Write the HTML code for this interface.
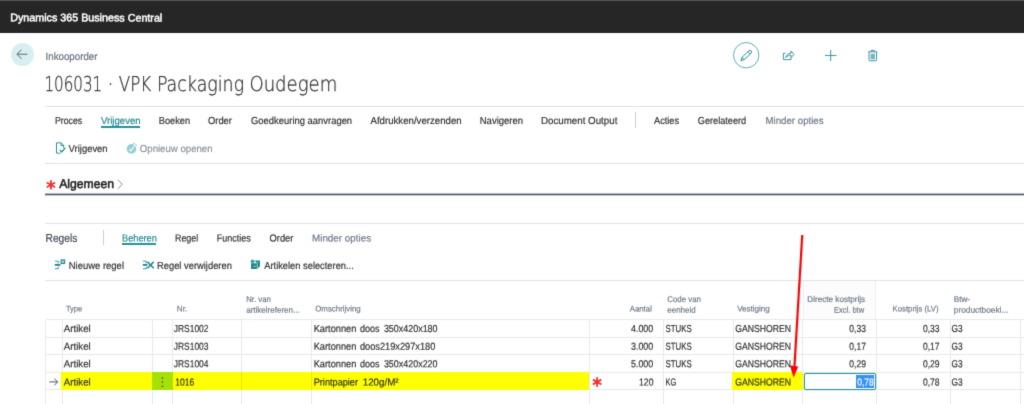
<!DOCTYPE html>
<html lang="nl">
<head>
<meta charset="utf-8">
<title>Inkooporder 106031 - Dynamics 365 Business Central</title>
<style>
html,body{margin:0;padding:0;background:#fff;}
body{width:1024px;height:404px;position:relative;overflow:hidden;font-family:"Liberation Sans",sans-serif;}
#fx{position:absolute;left:-8px;top:-8px;width:1040px;height:420px;background:#fff;filter:url(#soft);}
#page{position:absolute;left:8px;top:8px;width:1024px;height:404px;}
.t{position:absolute;left:0;top:0;white-space:pre;line-height:1;transform-origin:0 0;-webkit-text-stroke:0.18px currentColor;}
.sb{-webkit-text-stroke:0.5px currentColor;}
.tl{-webkit-text-stroke:0.3px currentColor;}
.abs{position:absolute;}
.topbar{left:-8px;top:-8px;width:1040px;height:40.5px;background:#262626;}
.topline{left:-8px;top:-8px;width:1040px;height:9px;background:#565656;}
.hl{position:absolute;height:1px;background:#e0e3e7;}
.vl{position:absolute;width:1px;background:#dde0e4;}
.gl{background:#e7e9eb;}
.back{left:10.5px;top:42.7px;width:23px;height:23px;border-radius:50%;background:#d8eff2;}
.yellow{background:#ffff00;}
</style>
</head>
<body>
<svg width="0" height="0" style="position:absolute"><defs><filter id="soft" x="0" y="0" width="100%" height="100%" color-interpolation-filters="sRGB"><feConvolveMatrix order="3" kernelMatrix="0.0144 0.0912 0.0144 0.0912 0.5776 0.0912 0.0144 0.0912 0.0144" edgeMode="duplicate" preserveAlpha="true"/></filter></defs></svg>
<div id="fx"><div id="page">
<div class="abs topbar"></div><div class="abs topline"></div>
<div class="abs back"></div>
<svg class="abs" style="left:0;top:0;overflow:visible" width="1024" height="404" viewBox="0 0 1024 404" fill="none">
  <rect x="45" y="193.6" width="990" height="1.7" fill="#4d586b"/>
  <!-- back arrow -->
  <path d="M27.5 54.2H17M21.6 49.6L17 54.2l4.6 4.6" stroke="#555" stroke-width="0.9"/>
</svg>

<!-- page header lines -->
<div class="hl" style="left:45px;top:105.5px;width:987px"></div>
<div class="hl" style="left:45px;top:163px;width:987px"></div>
<div class="hl" style="left:45px;top:222.6px;width:987px"></div>
<div class="hl" style="left:45px;top:280.3px;width:987px"></div>
<!-- active underlines -->
<div class="abs" style="left:100.8px;top:126.2px;width:39px;height:1.7px;background:#2a9099"></div>
<div class="abs" style="left:122px;top:243px;width:34.3px;height:1.7px;background:#2a9099"></div>
<!-- separators -->
<div class="vl" style="left:635px;top:112px;height:15.5px;background:#c9cdd1"></div>
<div class="vl" style="left:103.3px;top:230px;height:14.5px;background:#c9cdd1"></div>

<!-- grid -->
<div id="grid">
<div class="abs" style="left:802.7px;top:281px;width:73.3px;height:38.5px;background:#fcfcfd;border-left:1px solid #eff0f2;border-right:1px solid #eff0f2;box-sizing:border-box"></div>
<div class="hl gl" style="left:45.5px;top:319.0px;width:986.5px"></div>
<div class="hl gl" style="left:45.5px;top:336.6px;width:986.5px"></div>
<div class="hl gl" style="left:45.5px;top:354.2px;width:986.5px"></div>
<div class="hl gl" style="left:45.5px;top:371.8px;width:986.5px"></div>
<div class="hl gl" style="left:45.5px;top:389.4px;width:986.5px"></div>
<div class="vl gl" style="left:45.0px;top:319.5px;height:93px"></div>
<div class="vl gl" style="left:61.7px;top:319.5px;height:93px"></div>
<div class="vl gl" style="left:152.0px;top:319.5px;height:93px"></div>
<div class="vl gl" style="left:172.0px;top:319.5px;height:93px"></div>
<div class="vl gl" style="left:241.1px;top:319.5px;height:93px"></div>
<div class="vl gl" style="left:310.8px;top:319.5px;height:93px"></div>
<div class="vl gl" style="left:589.2px;top:319.5px;height:93px"></div>
<div class="vl gl" style="left:662.9px;top:319.5px;height:93px"></div>
<div class="vl gl" style="left:732.5px;top:319.5px;height:93px"></div>
<div class="vl gl" style="left:802.2px;top:319.5px;height:93px"></div>
<div class="vl gl" style="left:875.5px;top:319.5px;height:93px"></div>
<div class="vl gl" style="left:949.5px;top:319.5px;height:93px"></div>
<div class="vl gl" style="left:1019.8px;top:319.5px;height:93px"></div>
<div class="abs yellow" style="left:61.2px;top:372.3px;width:528px;height:17.6px"></div>
<div class="abs" style="left:152.3px;top:372.3px;width:20.4px;height:17.6px;background:#a5e006"></div>
<div class="abs" style="left:241.1px;top:372.3px;width:1px;height:17.6px;background:#e6e600"></div>
<div class="abs" style="left:310.8px;top:372.3px;width:1px;height:17.6px;background:#e6e600"></div>
<div class="abs yellow" style="left:732.3px;top:372.3px;width:70.6px;height:17.4px"></div>
<div class="abs" style="left:803.5px;top:373.4px;width:72.8px;height:16.4px;box-sizing:border-box;border:1px solid #2f9099;border-radius:2px;background:#fff;box-shadow:0 0 0 0.6px #bfe3e8"></div>
<div class="abs" style="left:856.2px;top:375.2px;width:17.7px;height:12.7px;background:#3391ff"></div>
</div>


<svg class="abs" style="left:0;top:0;overflow:visible" width="1024" height="404" viewBox="0 0 1024 404" fill="none" stroke-linecap="butt">
  <!-- edit (pencil in circle) -->
  <circle cx="746.2" cy="55.2" r="12.7" stroke="#4ba4ac" stroke-width="0.9"/>
  <g stroke="#238a94" stroke-width="0.9" stroke-linejoin="round" transform="translate(740.9 60.6) rotate(-43.2)">
    <path d="M0 0L3 -1.6H12.6a1.6 1.6 0 0 1 0 3.2H3z"/>
    <path d="M3 -1.6V1.6M11.3 -1.6V1.6"/>
  </g>
  <!-- share -->
  <g stroke="#238a94" stroke-width="0.9">
    <path d="M785.6 53.2H783.4v6.4h7.6v-2.2"/>
    <path d="M785.8 57.6c0.4-2.6 2.4-4.2 5.2-4.3v-2.3l3 3.3-3 3.3v-2.3c-2.2 0-3.9 0.6-5.2 2.3z" stroke-linejoin="round"/>
  </g>
  <!-- plus -->
  <path d="M825 55.5h11.4M830.7 49.9v11.2" stroke="#238a94" stroke-width="0.9"/>
  <!-- trash -->
  <g stroke="#238a94" stroke-width="0.9">
    <path d="M868 51.9h9.5M871 51.7v-1.3h3.5v1.3"/>
    <path d="M869 52.2v7.6a1 1 0 0 0 1 1h5.5a1 1 0 0 0 1-1v-7.6"/>
    <path d="M870.6 53.8v5.5h4.3v-5.5z" fill="#6fb6bd" stroke="none"/>
  </g>
  <!-- Vrijgeven doc icon -->
  <g stroke="#238a94" stroke-width="0.95" stroke-linejoin="round">
    <path d="M60.4 153.2H56.5v-10.4h4.6l2.5 2.5v2.6"/>
    <path d="M61 142.9v2.6h2.6"/>
    <path d="M59.9 150l1.9 2 3.6-4.3" stroke-width="1.2"/>
  </g>
  <!-- Opnieuw openen (disabled) -->
  <circle cx="131.5" cy="148.9" r="4.8" fill="#93cfd5"/>
  <path d="M129.2 149.2l1.7 1.7 3.9-5.6" stroke="#fff" stroke-width="1.1"/>
  <path d="M133.2 143.6l1.2-0.8 0.5 1.6M135.4 144.6l1.2 0.2-0.4 1.2" stroke="#93cfd5" stroke-width="0.9"/>
  <!-- Nieuwe regel -->
  <g stroke="#1f8791" stroke-width="1">
    <path d="M54.9 261.2h3.4v2M58.3 266.7v2h-3.4" stroke="#3a98a1"/>
    <path d="M54.8 264.9h5.6" stroke-width="1.9"/>
    <rect x="61.1" y="259.9" width="3.5" height="3.6" fill="#a9d5d9" stroke-width="1.1"/>
  </g>
  <!-- Regel verwijderen -->
  <g stroke="#1f8791" stroke-width="1">
    <path d="M142.9 261.2h3.4v2M146.3 266.7v2h-3.4" stroke="#3a98a1"/>
    <path d="M142.8 264.9h4.6" stroke-width="1.9"/>
    <path d="M147.5 261.9l6.2 6.3M153.7 261.9l-6.2 6.3" stroke-width="1.5"/>
  </g>
  <!-- Artikelen selecteren -->
  <g>
    <path d="M251 263.2h6.2l2.8-2.6v5.6l-2.8 2.8H251z" fill="#1f8791"/>
    <path d="M254.4 260.4h5.6l-2.8 2.8" fill="#1f8791"/>
    <circle cx="252.6" cy="261.4" r="1.9" fill="#3f9ea7"/>
    <path d="M253.6 266.3h2.2M257.3 263.4v5.4" stroke="#cfe9ec" stroke-width="0.7"/>
  </g>
  <!-- required asterisks -->
  <g stroke="#f6302b" stroke-width="1.8">
    <path d="M50.9 180.2v9.4M46.7 182.5l8.4 4.8M55.1 182.5l-8.4 4.8"/>
    <path d="M597.1 377.3v9.4M592.9 379.6l8.4 4.8M601.3 379.6l-8.4 4.8"/>
  </g>
  <!-- chevron -->
  <path d="M117.9 179.8l4.4 4.5-4.4 4.5" stroke="#777" stroke-width="0.85"/>
  <!-- row arrow -->
  <path d="M49.4 381.9h8.2M54.4 378.6l3.3 3.3-3.3 3.3" stroke="#4a4a4a" stroke-width="0.95"/>
  <!-- row menu dots -->
  <g fill="#4a5c0c"><rect x="161.7" y="377.3" width="1.4" height="1.5"/><rect x="161.7" y="381.4" width="1.4" height="1.5"/><rect x="161.7" y="385.5" width="1.4" height="1.5"/></g>
  <!-- annotation arrow -->
  <g>
    <path d="M803 235.4L795.2 367" stroke="#c9c9c9" stroke-width="2" opacity="0.6"/>
    <path d="M802.2 235L794.4 367" stroke="#ff0000" stroke-width="2.1"/>
    <path d="M789.9 365.4L798.3 366.4L793.6 377.4z" fill="#ff0000"/>
  </g>
</svg>


<div id="txt" style="position:absolute;left:0;top:0;width:1024px;height:404px;will-change:transform">
<span class="t sb" style="font-size:10.9px;color:#ffffff;transform:translate(10.15px,12.30px) scaleX(0.9855) rotate(0.04deg)">Dynamics 365 Business Central</span>
<span class="t" style="font-size:10.6px;color:#667080;transform:translate(45.60px,51.00px) scaleX(0.9174) rotate(0.04deg)">Inkooporder</span>
<span class="t tl" style="font-size:20.5px;color:#333333;font-weight:200;font-family:'DejaVu Sans Light','DejaVu Sans',sans-serif;transform:translate(44.43px,74.00px) scaleX(0.7371) rotate(0.04deg)">106031</span>
<span class="t tl" style="font-size:20.5px;color:#333333;font-weight:200;font-family:'DejaVu Sans Light','DejaVu Sans',sans-serif;transform:translate(107.20px,74.00px) scaleX(1.0000) rotate(0.04deg)">·</span>
<span class="t tl" style="font-size:20.5px;color:#333333;font-weight:200;font-family:'DejaVu Sans Light','DejaVu Sans',sans-serif;transform:translate(118.75px,74.00px) scaleX(0.8134) rotate(0.04deg)">VPK</span>
<span class="t tl" style="font-size:20.5px;color:#333333;font-weight:200;font-family:'DejaVu Sans Light','DejaVu Sans',sans-serif;transform:translate(156.90px,74.00px) scaleX(0.8496) rotate(0.04deg)">Packaging</span>
<span class="t tl" style="font-size:20.5px;color:#333333;font-weight:200;font-family:'DejaVu Sans Light','DejaVu Sans',sans-serif;transform:translate(249.42px,74.00px) scaleX(0.8824) rotate(0.04deg)">Oudegem</span>
<span class="t" style="font-size:10.2px;color:#2f2f2f;transform:translate(55.00px,115.90px) scaleX(0.8541) rotate(0.04deg)">Proces</span>
<span class="t" style="font-size:10.2px;color:#1f8791;transform:translate(101.00px,115.90px) scaleX(0.9414) rotate(0.04deg)">Vrijgeven</span>
<span class="t" style="font-size:10.2px;color:#2f2f2f;transform:translate(158.75px,115.90px) scaleX(0.9075) rotate(0.04deg)">Boeken</span>
<span class="t" style="font-size:10.2px;color:#2f2f2f;transform:translate(208.00px,115.90px) scaleX(0.9194) rotate(0.04deg)">Order</span>
<span class="t" style="font-size:10.2px;color:#2f2f2f;transform:translate(251.00px,115.90px) scaleX(0.9250) rotate(0.04deg)">Goedkeuring aanvragen</span>
<span class="t" style="font-size:10.2px;color:#2f2f2f;transform:translate(370.50px,115.90px) scaleX(0.9466) rotate(0.04deg)">Afdrukken/verzenden</span>
<span class="t" style="font-size:10.2px;color:#2f2f2f;transform:translate(479.75px,115.90px) scaleX(0.9340) rotate(0.04deg)">Navigeren</span>
<span class="t" style="font-size:10.2px;color:#2f2f2f;transform:translate(541.00px,115.90px) scaleX(0.9561) rotate(0.04deg)">Document Output</span>
<span class="t" style="font-size:10.2px;color:#2f2f2f;transform:translate(654.00px,115.90px) scaleX(0.9042) rotate(0.04deg)">Acties</span>
<span class="t" style="font-size:10.2px;color:#2f2f2f;transform:translate(697.75px,115.90px) scaleX(0.9006) rotate(0.04deg)">Gerelateerd</span>
<span class="t" style="font-size:10.2px;color:#6d7888;transform:translate(765.50px,115.90px) scaleX(0.9499) rotate(0.04deg)">Minder opties</span>
<span class="t" style="font-size:10.2px;color:#2f2f2f;transform:translate(68.60px,144.00px) scaleX(0.9269) rotate(0.04deg)">Vrijgeven</span>
<span class="t" style="font-size:10.2px;color:#8a939e;transform:translate(139.80px,144.00px) scaleX(0.9441) rotate(0.04deg)">Opnieuw openen</span>
<span class="t sb" style="font-size:12.6px;color:#1c1c1c;transform:translate(59.15px,178.00px) scaleX(0.9699) rotate(0.04deg)">Algemeen</span>
<span class="t" style="font-size:11.6px;color:#3e4756;transform:translate(45.50px,232.00px) scaleX(0.8817) rotate(0.04deg)">Regels</span>
<span class="t" style="font-size:10.2px;color:#1f8791;transform:translate(122.00px,233.50px) scaleX(0.9049) rotate(0.04deg)">Beheren</span>
<span class="t" style="font-size:10.2px;color:#2f2f2f;transform:translate(175.00px,233.50px) scaleX(0.8727) rotate(0.04deg)">Regel</span>
<span class="t" style="font-size:10.2px;color:#2f2f2f;transform:translate(216.75px,233.50px) scaleX(0.8852) rotate(0.04deg)">Functies</span>
<span class="t" style="font-size:10.2px;color:#2f2f2f;transform:translate(269.50px,233.50px) scaleX(0.9194) rotate(0.04deg)">Order</span>
<span class="t" style="font-size:10.2px;color:#6d7888;transform:translate(312.00px,233.50px) scaleX(0.9662) rotate(0.04deg)">Minder opties</span>
<span class="t" style="font-size:10.2px;color:#2f2f2f;transform:translate(68.75px,261.00px) scaleX(0.9291) rotate(0.04deg)">Nieuwe regel</span>
<span class="t" style="font-size:10.2px;color:#2f2f2f;transform:translate(157.00px,261.00px) scaleX(0.9181) rotate(0.04deg)">Regel verwijderen</span>
<span class="t" style="font-size:10.2px;color:#2f2f2f;transform:translate(264.25px,261.00px) scaleX(0.9137) rotate(0.04deg)">Artikelen selecteren...</span>
<span class="t" style="font-size:8.4px;color:#6d7888;transform:translate(65.90px,304.50px) scaleX(0.8920) rotate(0.04deg)">Type</span>
<span class="t" style="font-size:8.4px;color:#6d7888;transform:translate(176.80px,304.50px) scaleX(0.9639) rotate(0.04deg)">Nr.</span>
<span class="t" style="font-size:8.4px;color:#6d7888;transform:translate(246.20px,295.00px) scaleX(0.9340) rotate(0.04deg)">Nr. van</span>
<span class="t" style="font-size:8.4px;color:#6d7888;transform:translate(246.20px,305.80px) scaleX(0.9580) rotate(0.04deg)">artikelreferen...</span>
<span class="t" style="font-size:8.4px;color:#6d7888;transform:translate(315.25px,304.50px) scaleX(0.9387) rotate(0.04deg)">Omschrijving</span>
<span class="t" style="font-size:8.4px;color:#6d7888;transform:translate(629.70px,304.50px) scaleX(0.9336) rotate(0.04deg)">Aantal</span>
<span class="t" style="font-size:8.4px;color:#6d7888;transform:translate(667.30px,295.00px) scaleX(0.9380) rotate(0.04deg)">Code van</span>
<span class="t" style="font-size:8.4px;color:#6d7888;transform:translate(667.30px,305.80px) scaleX(0.9519) rotate(0.04deg)">eenheid</span>
<span class="t" style="font-size:8.4px;color:#6d7888;transform:translate(737.20px,304.50px) scaleX(0.9554) rotate(0.04deg)">Vestiging</span>
<span class="t" style="font-size:8.4px;color:#6d7888;transform:translate(807.30px,295.00px) scaleX(0.9717) rotate(0.04deg)">Directe kostprijs</span>
<span class="t" style="font-size:8.4px;color:#6d7888;transform:translate(834.00px,305.80px) scaleX(0.8996) rotate(0.04deg)">Excl. btw</span>
<span class="t" style="font-size:8.4px;color:#6d7888;transform:translate(892.60px,304.50px) scaleX(0.9248) rotate(0.04deg)">Kostprijs (LV)</span>
<span class="t" style="font-size:8.4px;color:#6d7888;transform:translate(953.80px,295.00px) scaleX(0.9699) rotate(0.04deg)">Btw-</span>
<span class="t" style="font-size:8.4px;color:#6d7888;transform:translate(953.80px,305.80px) scaleX(0.9925) rotate(0.04deg)">productboeki...</span>
<span class="t" style="font-size:10.1px;color:#2f2f2f;transform:translate(63.80px,323.90px) scaleX(0.9604) rotate(0.04deg)">Artikel</span>
<span class="t" style="font-size:10.1px;color:#2f2f2f;transform:translate(173.80px,323.90px) scaleX(0.8351) rotate(0.04deg)">JRS1002</span>
<span class="t" style="font-size:10.1px;color:#2f2f2f;transform:translate(313.70px,323.90px) scaleX(0.9159) rotate(0.04deg)">Kartonnen</span>
<span class="t" style="font-size:10.1px;color:#2f2f2f;transform:translate(359.90px,323.90px) scaleX(0.8974) rotate(0.04deg)">doos</span>
<span class="t" style="font-size:10.1px;color:#2f2f2f;transform:translate(383.90px,323.90px) scaleX(0.8852) rotate(0.04deg)">350x420x180</span>
<span class="t" style="font-size:10.1px;color:#2f2f2f;transform:translate(631.00px,323.90px) scaleX(0.8813) rotate(0.04deg)">4.000</span>
<span class="t" style="font-size:10.1px;color:#2f2f2f;transform:translate(665.50px,323.90px) scaleX(0.7813) rotate(0.04deg)">STUKS</span>
<span class="t" style="font-size:10.1px;color:#2f2f2f;transform:translate(735.20px,323.90px) scaleX(0.8584) rotate(0.04deg)">GANSHOREN</span>
<span class="t" style="font-size:10.1px;color:#2f2f2f;transform:translate(849.30px,323.90px) scaleX(0.8437) rotate(0.04deg)">0,33</span>
<span class="t" style="font-size:10.1px;color:#2f2f2f;transform:translate(923.00px,323.90px) scaleX(0.8437) rotate(0.04deg)">0,33</span>
<span class="t" style="font-size:10.1px;color:#2f2f2f;transform:translate(951.50px,323.90px) scaleX(0.8230) rotate(0.04deg)">G3</span>
<span class="t" style="font-size:10.1px;color:#2f2f2f;transform:translate(63.80px,341.70px) scaleX(0.9604) rotate(0.04deg)">Artikel</span>
<span class="t" style="font-size:10.1px;color:#2f2f2f;transform:translate(173.80px,341.70px) scaleX(0.8351) rotate(0.04deg)">JRS1003</span>
<span class="t" style="font-size:10.1px;color:#2f2f2f;transform:translate(313.70px,341.70px) scaleX(0.9159) rotate(0.04deg)">Kartonnen</span>
<span class="t" style="font-size:10.1px;color:#2f2f2f;transform:translate(359.90px,341.70px) scaleX(0.9145) rotate(0.04deg)">doos219x297x180</span>
<span class="t" style="font-size:10.1px;color:#2f2f2f;transform:translate(631.00px,341.70px) scaleX(0.8813) rotate(0.04deg)">3.000</span>
<span class="t" style="font-size:10.1px;color:#2f2f2f;transform:translate(665.50px,341.70px) scaleX(0.7813) rotate(0.04deg)">STUKS</span>
<span class="t" style="font-size:10.1px;color:#2f2f2f;transform:translate(735.20px,341.70px) scaleX(0.8584) rotate(0.04deg)">GANSHOREN</span>
<span class="t" style="font-size:10.1px;color:#2f2f2f;transform:translate(849.30px,341.70px) scaleX(0.8437) rotate(0.04deg)">0,17</span>
<span class="t" style="font-size:10.1px;color:#2f2f2f;transform:translate(923.00px,341.70px) scaleX(0.8437) rotate(0.04deg)">0,17</span>
<span class="t" style="font-size:10.1px;color:#2f2f2f;transform:translate(951.50px,341.70px) scaleX(0.8230) rotate(0.04deg)">G3</span>
<span class="t" style="font-size:10.1px;color:#2f2f2f;transform:translate(63.80px,359.30px) scaleX(0.9604) rotate(0.04deg)">Artikel</span>
<span class="t" style="font-size:10.1px;color:#2f2f2f;transform:translate(173.80px,359.30px) scaleX(0.8351) rotate(0.04deg)">JRS1004</span>
<span class="t" style="font-size:10.1px;color:#2f2f2f;transform:translate(313.70px,359.30px) scaleX(0.9159) rotate(0.04deg)">Kartonnen</span>
<span class="t" style="font-size:10.1px;color:#2f2f2f;transform:translate(359.90px,359.30px) scaleX(0.8974) rotate(0.04deg)">doos</span>
<span class="t" style="font-size:10.1px;color:#2f2f2f;transform:translate(383.90px,359.30px) scaleX(0.8852) rotate(0.04deg)">350x420x220</span>
<span class="t" style="font-size:10.1px;color:#2f2f2f;transform:translate(631.00px,359.30px) scaleX(0.8813) rotate(0.04deg)">5.000</span>
<span class="t" style="font-size:10.1px;color:#2f2f2f;transform:translate(665.50px,359.30px) scaleX(0.7813) rotate(0.04deg)">STUKS</span>
<span class="t" style="font-size:10.1px;color:#2f2f2f;transform:translate(735.20px,359.30px) scaleX(0.8584) rotate(0.04deg)">GANSHOREN</span>
<span class="t" style="font-size:10.1px;color:#2f2f2f;transform:translate(849.30px,359.30px) scaleX(0.8437) rotate(0.04deg)">0,29</span>
<span class="t" style="font-size:10.1px;color:#2f2f2f;transform:translate(923.00px,359.30px) scaleX(0.8437) rotate(0.04deg)">0,29</span>
<span class="t" style="font-size:10.1px;color:#2f2f2f;transform:translate(951.50px,359.30px) scaleX(0.8230) rotate(0.04deg)">G3</span>
<span class="t" style="font-size:10.1px;color:#2f2f2f;transform:translate(63.80px,377.40px) scaleX(0.9604) rotate(0.04deg)">Artikel</span>
<span class="t" style="font-size:10.1px;color:#2f2f2f;transform:translate(175.30px,377.40px) scaleX(0.8450) rotate(0.04deg)">1016</span>
<span class="t" style="font-size:10.1px;color:#2f2f2f;transform:translate(313.70px,377.40px) scaleX(0.9080) rotate(0.04deg)">Printpapier</span>
<span class="t" style="font-size:10.1px;color:#2f2f2f;transform:translate(362.70px,377.40px) scaleX(0.9690) rotate(0.04deg)">120g/M²</span>
<span class="t" style="font-size:10.1px;color:#2f2f2f;transform:translate(639.00px,377.40px) scaleX(0.8591) rotate(0.04deg)">120</span>
<span class="t" style="font-size:10.1px;color:#2f2f2f;transform:translate(665.50px,377.40px) scaleX(0.7331) rotate(0.04deg)">KG</span>
<span class="t" style="font-size:10.1px;color:#2f2f2f;transform:translate(735.20px,377.40px) scaleX(0.8584) rotate(0.04deg)">GANSHOREN</span>
<span class="t sel" style="font-size:10.1px;color:#ffffff;transform:translate(857.20px,377.40px) scaleX(0.8487) rotate(0.04deg)">0,78</span>
<span class="t" style="font-size:10.1px;color:#2f2f2f;transform:translate(923.00px,377.40px) scaleX(0.8437) rotate(0.04deg)">0,78</span>
<span class="t" style="font-size:10.1px;color:#2f2f2f;transform:translate(951.50px,377.40px) scaleX(0.8230) rotate(0.04deg)">G3</span>
</div>
</div></div>
</body>
</html>
